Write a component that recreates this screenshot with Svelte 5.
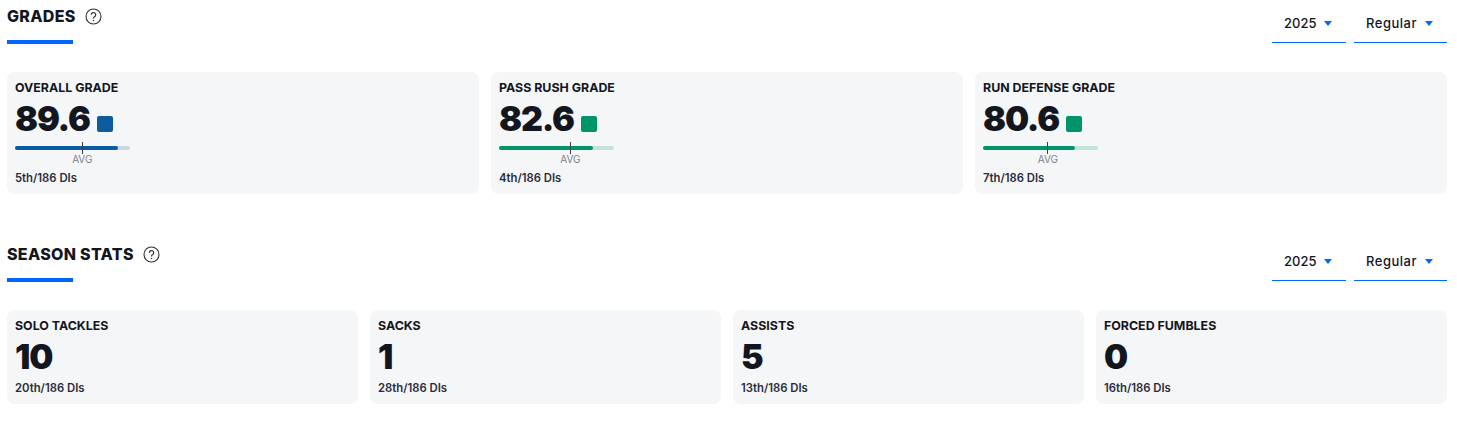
<script>
	const grades = [
		{ label: 'OVERALL GRADE', value: '89.6', color: '#0b5c9e', track: '#c5d8e6', fill: 89.6, avg: 58.5, rank: '5th/186 DIs' },
		{ label: 'PASS RUSH GRADE', value: '82.6', color: '#00946a', track: '#c3e3da', fill: 81.5, avg: 62, rank: '4th/186 DIs' },
		{ label: 'RUN DEFENSE GRADE', value: '80.6', color: '#00946a', track: '#c3e3da', fill: 80, avg: 56.5, rank: '7th/186 DIs' }
	];
	const stats = [
		{ label: 'SOLO TACKLES', value: '10', rank: '20th/186 DIs' },
		{ label: 'SACKS', value: '1', rank: '28th/186 DIs' },
		{ label: 'ASSISTS', value: '5', rank: '13th/186 DIs' },
		{ label: 'FORCED FUMBLES', value: '0', rank: '16th/186 DIs' }
	];
	const selects = ['2025', 'Regular'];
</script>

{#snippet header(title)}
	<div class="header">
		<div class="title-wrap">
			<div class="title">
				<h2>{title}</h2>
				<svg class="help" width="17" height="17" viewBox="0 0 17 17" fill="none">
					<circle cx="8.5" cy="8.5" r="7.5" stroke="#2f323a" stroke-width="1.1" />
					<path d="M6.3 6.8a2.2 2.2 0 1 1 3.4 1.8c-.8.5-1.2.9-1.2 1.8" stroke="#2f323a" stroke-width="1.2" />
					<circle cx="8.5" cy="12.4" r=".75" fill="#2f323a" />
				</svg>
			</div>
			<div class="underline"></div>
		</div>
		<div class="selects">
			{#each selects as s, i}
				<div class="select" class:wide={i === 1}>
					<span>{s}</span>
					<i class="caret"></i>
				</div>
			{/each}
		</div>
	</div>
{/snippet}

<main>
	<section class="grades">
		{@render header('GRADES')}
		<div class="cards three">
			{#each grades as g}
				<div class="card grade-card">
					<div class="label">{g.label}</div>
					<div class="value-row">
						<span class="value">{g.value}</span>
						<span class="swatch" style="background:{g.color}"></span>
					</div>
					<div class="bar" style="background:{g.track}">
						<div class="fill" style="width:{g.fill}%;background:{g.color}"></div>
						<div class="avg" style="left:{g.avg}%">
							<div class="tick"></div>
							<div class="avg-label">AVG</div>
						</div>
					</div>
					<div class="rank">{g.rank}</div>
				</div>
			{/each}
		</div>
	</section>

	<section>
		{@render header('SEASON STATS')}
		<div class="cards four">
			{#each stats as s}
				<div class="card">
					<div class="label">{s.label}</div>
					<div class="value-row"><span class="value">{s.value}</span></div>
					<div class="rank">{s.rank}</div>
				</div>
			{/each}
		</div>
	</section>
</main>

<style>
	:global(body) {
		background: #fff;
	}
	main {
		padding: 0 10px 0 7px;
		font-family: Inter, 'Liberation Sans', sans-serif;
		color: #14161f;
	}
	.grades {
		margin-bottom: 44px;
	}
	.header {
		display: flex;
		justify-content: space-between;
		height: 72px;
	}
	.title {
		display: flex;
		align-items: center;
		gap: 9px;
		height: 32px;
	}
	h2 {
		margin: 0;
		font-size: 16px;
		line-height: 32px;
		font-weight: 800;
		letter-spacing: 0.3px;
	}
	.underline {
		width: 66px;
		height: 4px;
		margin-top: 8px;
		background: #0066ff;
	}
	.selects {
		display: flex;
		gap: 8px;
	}
	.select {
		width: 74px;
		height: 43px;
		box-sizing: border-box;
		border-bottom: 1px solid #0066ff;
		padding: 15px 0 0 12px;
		display: flex;
		align-items: flex-start;
		gap: 8px;
		font-size: 13px;
		line-height: 16px;
		font-weight: 500;
	}
	.select.wide {
		width: 93px;
		letter-spacing: 0.5px;
	}
	.caret {
		width: 0;
		height: 0;
		margin-top: 6px;
		border-left: 4.5px solid transparent;
		border-right: 4.5px solid transparent;
		border-top: 5px solid #0066ff;
	}
	.cards {
		display: grid;
		gap: 12px;
	}
	.three {
		grid-template-columns: repeat(3, 1fr);
	}
	.four {
		grid-template-columns: repeat(4, 1fr);
	}
	.card {
		background: #f5f6f8;
		border-radius: 8px;
		padding: 8px;
		height: 94px;
		box-sizing: border-box;
	}
	.grade-card {
		height: 122px;
	}
	.label {
		font-size: 12.4px;
		line-height: 16px;
		font-weight: 700;
	}
	.value-row {
		display: flex;
		align-items: flex-end;
		gap: 7px;
		height: 42px;
	}
	.value {
		font-size: 34px;
		line-height: 38px;
		font-weight: 900;
		letter-spacing: -1.2px;
	}
	.swatch {
		width: 16px;
		height: 16px;
		border-radius: 2px;
		margin-bottom: 6px;
	}
	.bar {
		position: relative;
		width: 115px;
		height: 4px;
		border-radius: 2px;
		margin-top: 8px;
	}
	.fill {
		height: 100%;
		border-radius: 2px;
	}
	.avg {
		position: absolute;
		top: -4px;
		display: flex;
		flex-direction: column;
		align-items: center;
		width: 0;
	}
	.tick {
		width: 1px;
		height: 12px;
		background: #3c3f47;
		flex: none;
	}
	.avg-label {
		font-size: 10px;
		line-height: 10px;
		color: #7c808c;
	}
	.rank {
		font-size: 11.3px;
		line-height: 14px;
		font-weight: 600;
		color: #2a2d38;
		margin-top: 5px;
	}
	.grade-card .rank {
		margin-top: 21px;
	}
</style>
